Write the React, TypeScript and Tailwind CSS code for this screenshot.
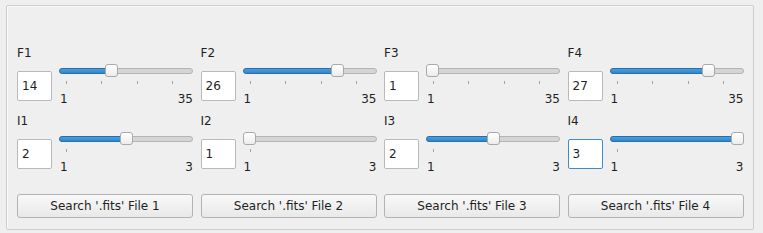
import React from "react";

interface SliderProps {
  value: number;
  min: number;
  max: number;
  interval: number;
}

const WIDTH = 134;
const HANDLE = 13;

const Slider = ({ value, min, max, interval }: SliderProps) => {
  const travel = WIDTH - HANDLE;
  const frac = (value - min) / (max - min);
  const ticks: number[] = [];
  for (let v = min; v <= max; v += interval) ticks.push(v);

  return (
    <div className="flex flex-col w-[134px]">
      <div className="relative h-[13px] w-full">
        <div className="absolute left-0 right-0 top-[4px] h-[6px] rounded-full border border-[#b4b4b4] bg-[#d5d5d5]" />
        <div
          className="absolute left-0 top-[4px] h-[6px] rounded-full border border-[#2c6ea6] bg-[linear-gradient(#4a9ee0,#2f86cc)]"
          style={{ width: frac * travel + HANDLE / 2 + 1 }}
        />
        <div
          className="absolute top-0 h-[13px] w-[13px] rounded-[3px] border border-[#a9a9a9] bg-[linear-gradient(#ffffff,#ececec)]"
          style={{ left: frac * travel }}
        />
      </div>
      <div className="relative h-[3px] mt-[4px]">
        {ticks.map((t) => (
          <div
            key={t}
            className="absolute top-0 h-[3px] w-px bg-[#a4a4a4]"
            style={{ left: Math.round(HANDLE / 2 + ((t - min) / (max - min)) * travel) }}
          />
        ))}
      </div>
      <div className="flex justify-between mt-[8px] leading-[14px] pl-px">
        <span>{min}</span>
        <span>{max}</span>
      </div>
    </div>
  );
};

const Field = ({ label, value, min, max, focused }: { label: string; value: number; min: number; max: number; focused?: boolean }) => (
  <div className="flex flex-col">
    <p className="leading-[14px]">{label}</p>
    <div className="flex items-start gap-[7px] mt-[4px]">
      <div
        className={
          "mt-[7px] flex h-[30px] w-[35px] items-center rounded-[2px] bg-white pl-[4px] border " +
          (focused ? "border-[#3d8ccc]" : "border-[#b9b9b9]")
        }
      >
        {value}
      </div>
      <Slider value={value} min={min} max={max} interval={10} />
    </div>
  </div>
);

const columns = [
  { f: 14, i: 2 },
  { f: 26, i: 1 },
  { f: 1, i: 2 },
  { f: 27, i: 3 },
];

export default function App() {
  return (
    <div className="h-[233px] w-[763px] bg-[#efefef] pt-[5px] pl-[6px] text-[12px] text-[#1f1f1f] font-['DejaVu_Sans',sans-serif]">
      <div className="h-[225px] w-[748px] rounded-[2px] border border-[#cdcdcd] shadow-[inset_1px_1px_0_#fafafa] pl-[10px] pt-[40px]">
        <div className="grid grid-cols-[repeat(4,176.5px)] gap-x-[7px]">
          {columns.map((c, idx) => (
            <div key={idx} className="flex flex-col">
              <Field label={`F${idx + 1}`} value={c.f} min={1} max={35} />
              <div className="mt-[8px]">
                <Field label={`I${idx + 1}`} value={c.i} min={1} max={3} focused={idx === 3} />
              </div>
              <button className="mt-[20px] h-[24px] w-[176px] rounded-[3px] border border-[#b3b3b3] bg-[linear-gradient(#f8f8f8,#e9e9e9)] text-[#1f1f1f]">
                Search '.fits' File {idx + 1}
              </button>
            </div>
          ))}
        </div>
      </div>
    </div>
  );
}
